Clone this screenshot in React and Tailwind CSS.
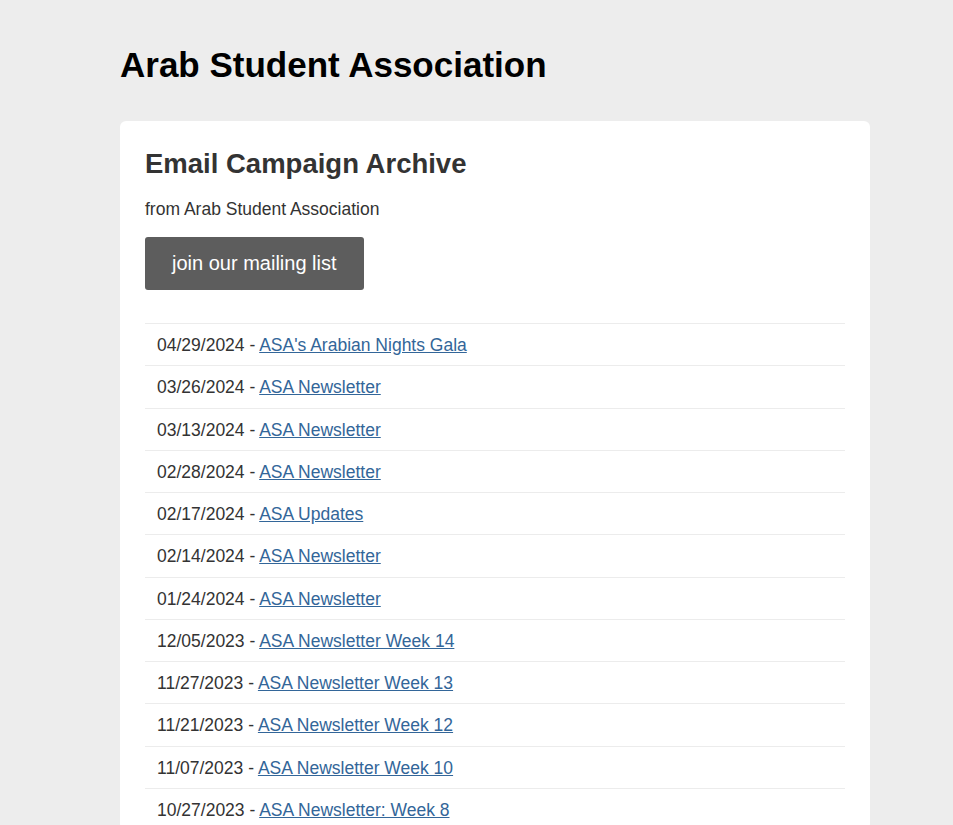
const campaigns = [
  { date: '04/29/2024', title: "ASA's Arabian Nights Gala" },
  { date: '03/26/2024', title: 'ASA Newsletter' },
  { date: '03/13/2024', title: 'ASA Newsletter' },
  { date: '02/28/2024', title: 'ASA Newsletter' },
  { date: '02/17/2024', title: 'ASA Updates' },
  { date: '02/14/2024', title: 'ASA Newsletter' },
  { date: '01/24/2024', title: 'ASA Newsletter' },
  { date: '12/05/2023', title: 'ASA Newsletter Week 14' },
  { date: '11/27/2023', title: 'ASA Newsletter Week 13' },
  { date: '11/21/2023', title: 'ASA Newsletter Week 12' },
  { date: '11/07/2023', title: 'ASA Newsletter Week 10' },
  { date: '10/27/2023', title: 'ASA Newsletter: Week 8' },
]

export default function App() {
  return (
    <div className="min-h-screen bg-[#ededed] font-['Liberation_Sans',Arial,sans-serif]">
      <div className="w-[750px] ml-[120px] pt-[45px]">
        {/* header */}
        <h1 className="text-[35px] leading-[40px] font-bold text-black">Arab Student Association</h1>

        {/* archive card */}
        <div className="mt-[36px] bg-white rounded-[6px] px-[25px] pt-[25px] text-[#333]">
          <h2 className="text-[27.5px] leading-[35px] font-bold">Email Campaign Archive</h2>
          <p className="mt-[15.5px] text-[17.5px] leading-[25px]">from Arab Student Association</p>
          <button className="mt-[15.5px] h-[53px] px-[27px] bg-[#5d5d5d] rounded-[3px] text-white text-[20px] leading-[23px]">
            join our mailing list
          </button>

          <ul className="mt-[33px]">
            {campaigns.map((c, i) => (
              <li key={i} className="border-t border-[#ececec] pl-3 pt-[9px] pb-[7px] text-[17.5px] leading-[25.27px]">
                {c.date} - <a href="#" className="text-[#336699] underline">{c.title}</a>
              </li>
            ))}
          </ul>
        </div>
      </div>
    </div>
  )
}
